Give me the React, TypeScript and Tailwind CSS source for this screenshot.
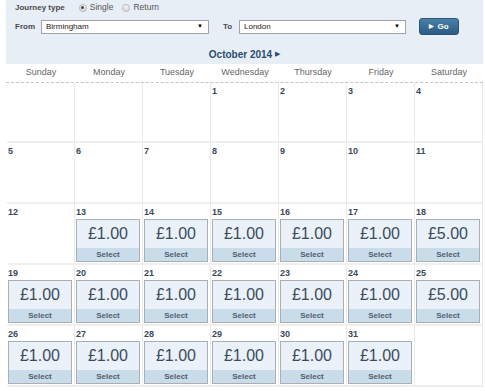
import React from 'react';

const days = ['Sunday', 'Monday', 'Tuesday', 'Wednesday', 'Thursday', 'Friday', 'Saturday'];

const prices: Record<number, string> = {
  13: '£1.00', 14: '£1.00', 15: '£1.00', 16: '£1.00', 17: '£1.00', 18: '£5.00',
  19: '£1.00', 20: '£1.00', 21: '£1.00', 22: '£1.00', 23: '£1.00', 24: '£1.00', 25: '£5.00',
  26: '£1.00', 27: '£1.00', 28: '£1.00', 29: '£1.00', 30: '£1.00', 31: '£1.00',
};

// October 2014 starts on a Wednesday
const cells: (number | null)[] = [
  null, null, null,
  ...Array.from({ length: 31 }, (_, i) => i + 1),
  null,
];

function Radio({ checked }: { checked?: boolean }) {
  return (
    <span className="w-[8px] h-[8px] rounded-full border border-[#b4b8bc] bg-gradient-to-b from-[#f4f4f4] to-[#dcdcdc] flex items-center justify-center">
      {checked && <span className="w-[3px] h-[3px] rounded-full bg-[#444]" />}
    </span>
  );
}

function Select({ value, width }: { value: string; width: string }) {
  return (
    <div className={`${width} h-[14px] bg-white border border-[#a3a3a3] flex items-center justify-between pl-[4px] pr-[5px]`}>
      <span className="text-[8px] text-[#222]">{value}</span>
      <span className="text-[6px] text-black">▼</span>
    </div>
  );
}

function Card({ price }: { price: string }) {
  return (
    <div className="ml-[1px] mt-[1px] w-[64px] border border-[#a9afb5]">
      <div className="h-[28px] bg-[#eaf1f8] flex items-center justify-center text-[16px] text-[#3b4b5e]">{price}</div>
      <div className="h-[13px] bg-[#c9dcea] flex items-center justify-center text-[8px] font-bold text-[#52606e]">Select</div>
    </div>
  );
}

export default function App() {
  const rows = [0, 1, 2, 3, 4];
  return (
    <div className="w-[485px] h-[391px] bg-white font-['Liberation_Sans',Arial,sans-serif]">
      <div className="ml-[6px] w-[477px]">
        <div className="h-[64px] bg-[#e8eef6] pl-[9px]">
          <div className="h-[15px] flex items-center">
            <span className="text-[8px] font-bold text-[#4a4a4a]">Journey type</span>
            <span className="ml-[14px]"><Radio checked /></span>
            <span className="ml-[3px] text-[8.5px] text-[#555]">Single</span>
            <span className="ml-[9px]"><Radio /></span>
            <span className="ml-[3px] text-[8.5px] text-[#555]">Return</span>
          </div>
          <div className="mt-[3px] h-[17px] flex items-center">
            <span className="text-[8px] font-bold text-[#4a4a4a] w-[26px]">From</span>
            <Select value="Birmingham" width="w-[168px]" />
            <span className="ml-[14px] w-[16px] text-[8px] font-bold text-[#4a4a4a]">To</span>
            <Select value="London" width="w-[167px]" />
            <button className="ml-[13px] w-[40px] h-[17px] rounded-[3px] border border-[#2b5678] bg-gradient-to-b from-[#4b80aa] to-[#2b5b82] flex items-center justify-center gap-[3px] text-white text-[8px] font-bold">
              <span className="text-[6px]">▶</span>
              <span>Go</span>
            </button>
          </div>
          <div className="mt-[9px] h-[20px] flex items-center justify-center pr-[9px]">
            <span className="text-[10px] font-bold text-[#2b4d70]">October 2014</span>
            <span className="ml-[3px] text-[7px] text-[#2b4d70]">▶</span>
          </div>
        </div>
        <div className="pl-px h-[19px] grid grid-cols-[repeat(7,68px)] border-b border-dashed border-[#c4c4c4]">
          {days.map((d) => (
            <div key={d} className="flex items-center justify-center text-[9px] text-[#666]">{d}</div>
          ))}
        </div>
        <div className="pl-px">
          {rows.map((r) => (
            <div key={r} className={`grid grid-cols-[repeat(7,68px)] ${r === 0 ? 'h-[60px]' : 'h-[61px]'}`}>
              {cells.slice(r * 7, r * 7 + 7).map((n, i) => (
                <div key={i} className="border-r border-b-2 border-r-[#e8e8e8] border-b-[#efefef]">
                  {n !== null && (
                    <>
                      <div className="pl-[1px] pt-[2px] h-[14px] leading-[12px] text-[9px] font-bold text-[#3a4a5c]">{n}</div>
                      {prices[n] && <Card price={prices[n]} />}
                    </>
                  )}
                </div>
              ))}
            </div>
          ))}
        </div>
      </div>
    </div>
  );
}
